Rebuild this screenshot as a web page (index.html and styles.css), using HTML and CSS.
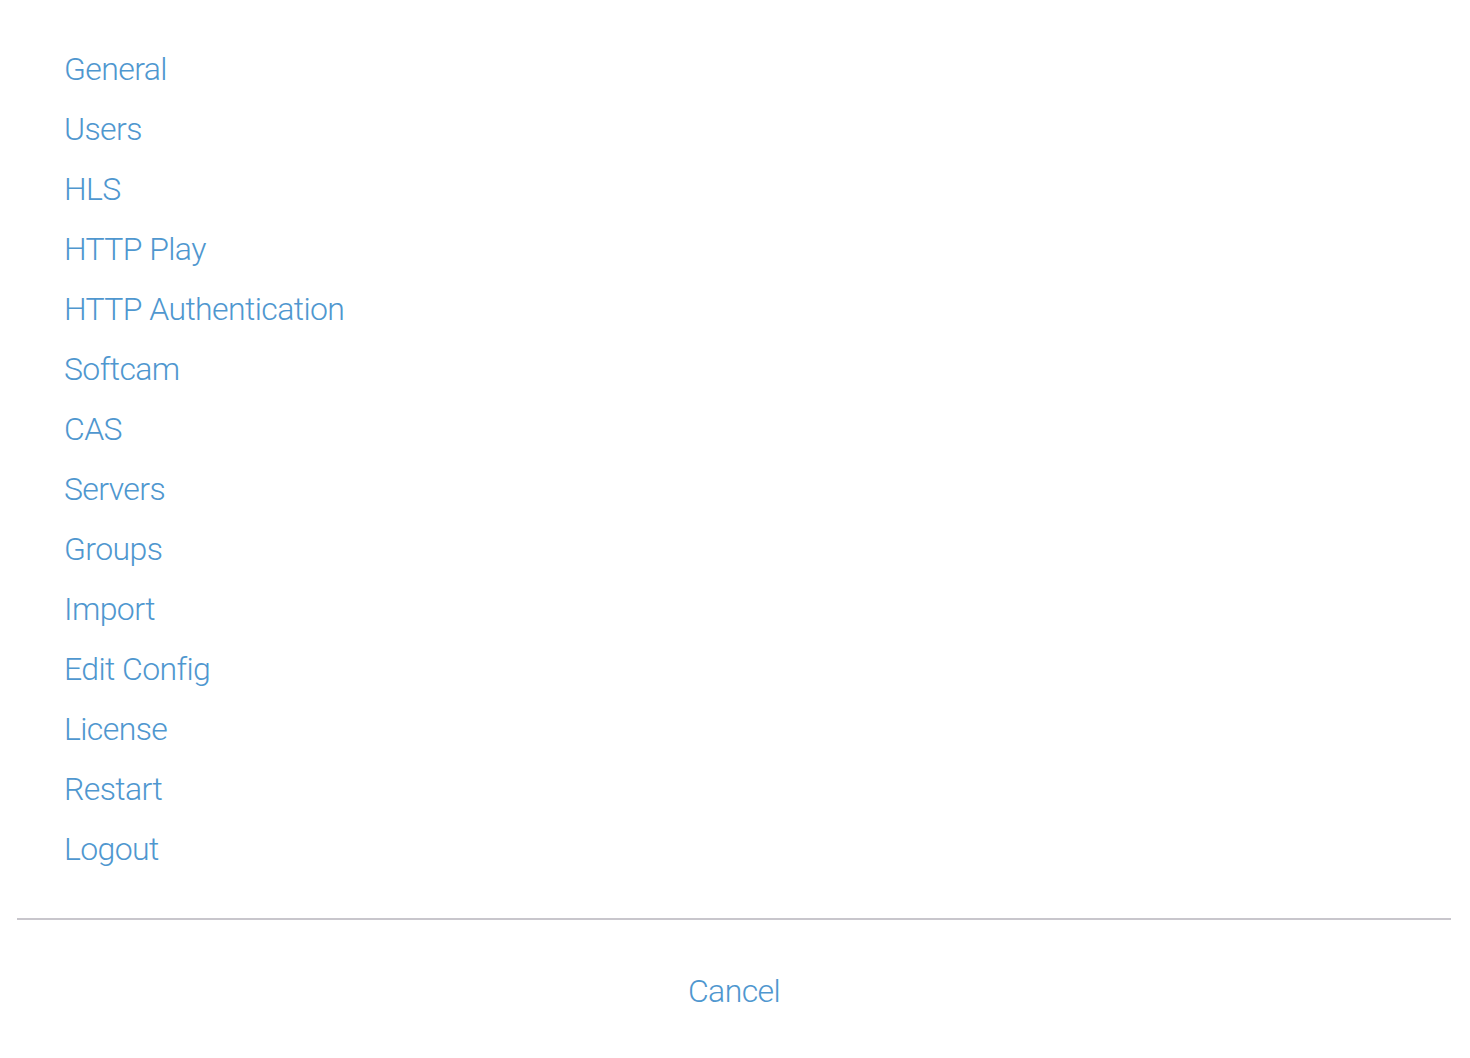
FILE: index.html
```html
<!DOCTYPE html>
<html>
<head>
<meta charset="utf-8">
<link rel="stylesheet" href="styles.css">
</head>
<body>
<div class="sheet">
  <ul class="menu">
    <li><a href="#">General</a></li>
    <li><a href="#">Users</a></li>
    <li><a href="#">HLS</a></li>
    <li><a href="#">HTTP Play</a></li>
    <li><a href="#">HTTP Authentication</a></li>
    <li><a href="#">Softcam</a></li>
    <li><a href="#">CAS</a></li>
    <li><a href="#">Servers</a></li>
    <li><a href="#">Groups</a></li>
    <li><a href="#">Import</a></li>
    <li><a href="#">Edit Config</a></li>
    <li><a href="#">License</a></li>
    <li><a href="#">Restart</a></li>
    <li><a href="#">Logout</a></li>
  </ul>
  <div class="divider"></div>
  <div class="footer"><a href="#">Cancel</a></div>
</div>
</body>
</html>
```

FILE: styles.css
```css
html, body {
  margin: 0;
  padding: 0;
  background: #ffffff;
}
body {
  font-family: Roboto, "Liberation Sans", sans-serif;
  font-weight: 300;
}
.sheet {
  display: flex;
  flex-direction: column;
  padding-top: 39px;
}
.menu {
  list-style: none;
  margin: 0;
  padding: 0 0 0 64px;
  display: flex;
  flex-direction: column;
}
.menu li {
  height: 60px;
  display: flex;
  align-items: center;
}
.menu a, .footer a {
  color: #4f97cf;
  text-decoration: none;
  font-size: 32px;
  line-height: 60px;
  letter-spacing: -0.6px;
}
.divider {
  margin: 39px 19px 0 17px;
  height: 2px;
  background: #c8c6cc;
}
.footer {
  display: flex;
  justify-content: center;
  padding: 41px 0 0 0;
}
.footer a {
  margin-left: -2px;
}
```
